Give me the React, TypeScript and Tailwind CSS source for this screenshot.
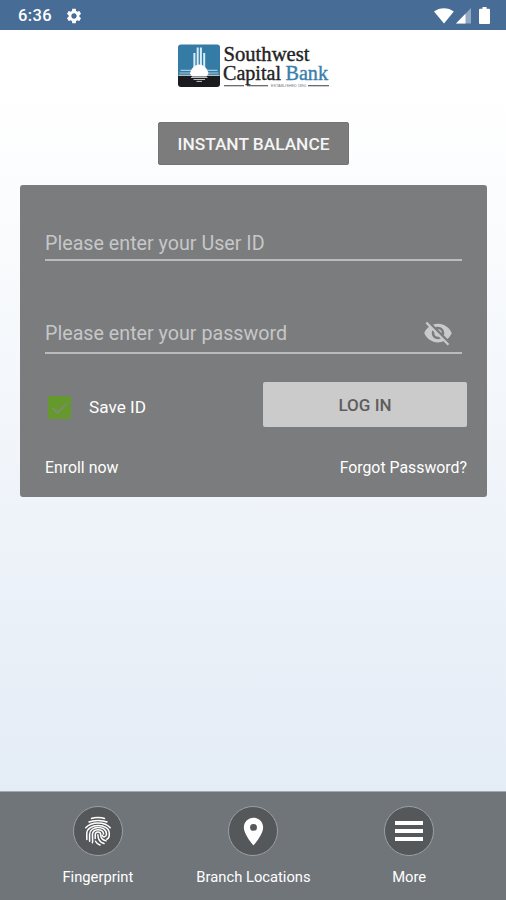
import type { ReactNode } from 'react';
import { MdLocationOn, MdSettings, MdVisibilityOff } from 'react-icons/md';

const StatusBar = () => (
  <header className="flex h-[30px] items-center justify-between bg-[#476c95] pt-px pr-[16px] pl-[18px] text-white">
    <div className="flex items-center gap-[13px]">
      <span className="pt-px text-[16.5px] leading-none font-medium tracking-[0.4px]">
        6:36
      </span>
      <MdSettings size={18} />
    </div>
    <div className="flex items-center">
      <svg width="20" height="16" viewBox="0 0 20 16" fill="currentColor">
        <path d="M0 3.600C5.500-.9 14.300-.9 19.800 3.600L10 15.500Z" />
      </svg>
      <svg className="ml-[2px]" width="15" height="16" viewBox="0 0 15 16">
        <path d="M15 0V15.500H0Z" fill="#91a9c1" />
        <path d="M9.500 5.700V15.500H0Z" fill="#fff" />
      </svg>
      <svg
        className="ml-[8px]"
        width="11"
        height="17"
        viewBox="0 0 11 17"
        fill="currentColor"
      >
        <path d="M3.500 0h4v1.800H10a1 1 0 0 1 1 1V16a1 1 0 0 1-1 1H1a1 1 0 0 1-1-1V2.800a1 1 0 0 1 1-1h2.500Z" />
      </svg>
    </div>
  </header>
);

const Logo = () => (
  <svg
    className="ml-[2px] h-[45px] w-[152px]"
    viewBox="0 0 152 45"
    role="img"
    aria-label="Southwest Capital Bank"
  >
    <path d="M3 .5H39a3 3 0 0 1 3 3V31H0V3.500a3 3 0 0 1 3-3Z" fill="#347ba6" />
    <path d="M0 31.500H42V40a3 3 0 0 1-3 3H3a3 3 0 0 1-3-3Z" fill="#1b1b1d" />
    <path d="M1 31.300H41" stroke="#c9dfe9" strokeWidth=".8" />
    {/* sun rays */}
    <g stroke="#d8edf5" strokeWidth="2">
      <path d="M16.400 9V23M19.700 3.500V22M22.900 3.500V22M26.200 9V23" />
      <path
        d="M2.500 26.300H14M1.500 29H14M28 26.300H39.500M28 29H40.500"
        stroke="#a5cbdd"
        strokeWidth="1.200"
      />
    </g>
    <path
      d="M12 29.500C13.500 24 16.500 20.500 21.200 20.500S29 24 30.500 29.500L28.500 32.500H14Z"
      fill="#fff"
    />
    <path
      d="M13 33.500H29.500M15.500 35.500H27M18.500 37.400H24"
      stroke="#bfc3c5"
      strokeWidth="1"
    />
    <g fontFamily="Liberation Serif, serif" fontSize="20.500" strokeWidth=".4">
      <text
        x="45.500"
        y="16.500"
        fill="#242426"
        stroke="#242426"
        textLength="86"
        lengthAdjust="spacingAndGlyphs"
      >
        Southwest
      </text>
      <text
        x="45"
        y="35.700"
        fill="#242426"
        stroke="#242426"
        textLength="58"
        lengthAdjust="spacingAndGlyphs"
      >
        Capital
      </text>
      <text
        x="107.500"
        y="35.700"
        fill="#3a7fac"
        stroke="#3a7fac"
        textLength="42.500"
        lengthAdjust="spacingAndGlyphs"
      >
        Bank
      </text>
    </g>
    <path
      d="M46 41.700H66M69 41.700H90M130 41.700H151"
      stroke="#3c3c3e"
      strokeWidth="1.100"
    />
    <text
      x="93"
      y="43.100"
      fill="#77797b"
      fontFamily="Liberation Sans, sans-serif"
      fontSize="3.800"
      textLength="35"
      lengthAdjust="spacingAndGlyphs"
    >
      ESTABLISHED 1890
    </text>
  </svg>
);

const FingerprintIcon = () => (
  <svg
    width="28"
    height="30"
    viewBox="0 0 28 30"
    fill="none"
    stroke="currentColor"
    strokeWidth="1.500"
    strokeLinecap="round"
  >
    <path d="M7.500 2.500C10.500 1.300 17.500 1.300 20.500 2.500" />
    <path d="M5 6C9.500 3.900 18.500 3.900 23 6" />
    <path d="M1.800 11.800C7 5.300 21 5.300 26.200 11.800" />
    <path d="M2.800 23.500V17.500C3 7.300 25 6.500 25.300 17.500C25.500 20.500 24.600 22.500 22.800 23.300" />
    <path d="M5.600 25.300V18.500C5.600 9.300 22.300 9 22.500 18C22.500 21.300 18.800 21.800 18.300 19.300" />
    <path d="M8.400 26.800C9 24.300 8.400 21.500 8.400 18.800C8.600 12.300 19.300 12 19.600 18" />
    <path d="M11.200 22.500V18.800C11.300 15 16.600 15 16.700 18.600C16.700 22.300 18.600 24.300 22 24.800" />
    <path d="M13.900 18.800C13.900 23.800 15.700 26.300 20 27.500" />
    <path d="M11.500 25.300C12.300 27 14 28.300 16 29" />
  </svg>
);

interface FieldProps {
  placeholder: string;
  className?: string;
  icon?: ReactNode;
}

const Field = ({ placeholder, className, icon }: FieldProps) => (
  <div
    className={`flex items-center justify-between border-b-2 border-[#bbbbbc] text-[19.7px] text-[#c6c7c8] ${className}`}
  >
    <span className="pt-[2px] leading-none">{placeholder}</span>
    {icon}
  </div>
);

interface NavItemProps {
  label: string;
  children: ReactNode;
}

const NavItem = ({ label, children }: NavItemProps) => (
  <div className="flex flex-col items-center gap-[12px]">
    <div className="flex size-[50px] items-center justify-center rounded-full border-[1.5px] border-[#9da0a3] bg-[#55585b]">
      {children}
    </div>
    <span className="text-[14.75px] leading-[18px] whitespace-nowrap">
      {label}
    </span>
  </div>
);

const App = () => (
  <div className="flex h-[900px] w-[506px] flex-col bg-linear-to-b from-white from-10% to-[#e4ecf6] to-88% font-[Roboto,sans-serif]">
    <StatusBar />

    <main className="flex flex-1 flex-col items-center pt-[14px]">
      <Logo />

      <button className="mt-[33px] ml-px h-[43px] w-[191px] rounded-[2px] border border-[#737475] bg-[#7c7c7d] pt-[2px] text-[17.3px] font-medium whitespace-nowrap text-[#f4f4f4]">
        INSTANT BALANCE
      </button>

      <section className="mt-5 ml-px h-[312px] w-[467px] rounded-[3px] bg-[#7b7c7d] pr-5 pl-[25px] text-white">
        <Field
          className="mr-[5px] h-[76px] pt-[42px]"
          placeholder="Please enter your User ID"
        />
        <Field
          className="mr-[5px] h-[93px] pt-[52px]"
          placeholder="Please enter your password"
          icon={
            <MdVisibilityOff className="mr-[9px]" color="#c9cacb" size={30} />
          }
        />

        <div className="mt-[28px] flex h-[45px] items-center justify-between">
          <div className="flex items-center gap-[18px] pt-[6px] pl-[3px]">
            <span className="flex size-[23px] items-center justify-center rounded-[2px] bg-[#65992e]">
              <svg width="18" height="16" viewBox="0 0 18 16" fill="none">
                <path
                  d="M1.500 8 6.500 13 16 3"
                  stroke="#7b8d68"
                  strokeWidth="2"
                />
              </svg>
            </span>
            <span className="pt-px text-[17.2px] leading-none">Save ID</span>
          </div>
          <button className="h-[45px] w-[204px] rounded-[2px] bg-[#cbcbcb] pt-[2px] text-[17px] font-medium text-[#5d5d5e]">
            LOG IN
          </button>
        </div>

        <div className="mt-[31px] flex justify-between text-[15.85px] leading-5">
          <span>Enroll now</span>
          <span>Forgot Password?</span>
        </div>
      </section>
    </main>

    <nav className="grid h-[109px] grid-cols-3 border-t border-[#a4a9ae] bg-[#70757a] pt-[14px] pr-[19px] pl-[20px] text-white">
      <NavItem label="Fingerprint">
        <FingerprintIcon />
      </NavItem>
      <NavItem label="Branch Locations">
        <MdLocationOn size={33} />
      </NavItem>
      <NavItem label="More">
        <svg width="28" height="20" viewBox="0 0 28 20" fill="currentColor">
          <path d="M0 0h28v4H0ZM0 8h28v4H0ZM0 16h28v4H0Z" />
        </svg>
      </NavItem>
    </nav>
  </div>
);

export default App;
